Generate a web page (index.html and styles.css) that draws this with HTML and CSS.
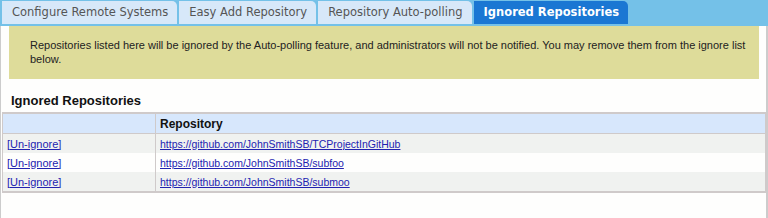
FILE: index.html
```html
<!DOCTYPE html>
<html lang="en">
<head>
    <meta charset="UTF-8">
    <meta name="viewport" content="width=device-width, initial-scale=1.0">
    <title>Ignored Repositories</title>
    <link rel="stylesheet" href="styles.css">
</head>
<body>
    <div class="tabs">
        <div class="tab">Configure Remote Systems</div>
        <div class="tab">Easy Add Repository</div>
        <div class="tab">Repository Auto-polling</div>
        <div class="tab active">Ignored Repositories</div>
    </div>
    <div class="panel">
        <div class="notice">
            Repositories listed here will be ignored by the Auto-polling feature, and administrators will not be notified. You may remove them from the ignore list below.
        </div>
        <h2>Ignored Repositories</h2>
        <table class="repos">
            <thead>
                <tr>
                    <th class="action-col"></th>
                    <th>Repository</th>
                </tr>
            </thead>
            <tbody>
                <tr>
                    <td><a href="#">[Un-ignore]</a></td>
                    <td><a href="#" class="url">https://github.com/JohnSmithSB/TCProjectInGitHub</a></td>
                </tr>
                <tr>
                    <td><a href="#">[Un-ignore]</a></td>
                    <td><a href="#" class="url">https://github.com/JohnSmithSB/subfoo</a></td>
                </tr>
                <tr>
                    <td><a href="#">[Un-ignore]</a></td>
                    <td><a href="#" class="url">https://github.com/JohnSmithSB/submoo</a></td>
                </tr>
            </tbody>
        </table>
    </div>
</body>
</html>
```

FILE: styles.css
```css
body {
    margin: 0;
    font-family: "Liberation Sans", Arial, sans-serif;
    background-color: #fefefd;
    height: 218px;
    overflow: hidden;
}
.tabs {
    display: flex;
    gap: 2px;
    background-color: #74c1e8;
    padding: 1px 0 2px 2px;
}
.tab {
    height: 23px;
    line-height: 23px;
    padding: 0 9px 0 10px;
    font-family: "DejaVu Sans", Verdana, sans-serif;
    font-size: 11.5px;
    color: #555;
    background-color: #d7e8f9;
    border-radius: 0 5px 0 0;
}
.tab.active {
    background-color: #1a77d3;
    color: #fff;
    font-weight: bold;
}
.panel {
    border-left: 1px solid #ccc;
    border-right: 2px solid #ccc;
    height: 192px;
}
.notice {
    margin: 0 7px 0 8px;
    padding: 12px 10px 13px 21px;
    background-color: #dedc9a;
    color: #222;
    font-size: 11px;
    line-height: 14px;
}
h2 {
    margin: 0;
    padding: 14px 0 0 10px;
    height: 19px;
    font-size: 13px;
    color: #111;
}
.repos {
    margin-left: 1px;
    width: 765px;
    border-collapse: collapse;
    border-top: 2px solid #cfcaca;
    border-right: 2px solid #cfcaca;
    border-left: 1px solid #cfcaca;
    border-bottom: 2px solid #cfcaca;
    font-size: 11px;
}
.repos th {
    height: 19px;
    padding: 0 4px;
    text-align: left;
    font-size: 12px;
    background-color: #d7e7fc;
    border-bottom: 1px solid #cfcaca;
    color: #111;
}
.repos th.action-col {
    width: 144px;
}
.repos th + th,
.repos td + td {
    border-left: 1px solid #cfcaca;
}
.repos td {
    height: 19px;
    padding: 0 4px;
}
.repos tbody tr:nth-child(odd) {
    background-color: #f0f2f0;
}
.repos tbody tr:nth-child(even) {
    background-color: #fefefd;
}
.repos a {
    color: #2222b0;
}
.repos a.url {
    font-size: 10.5px;
}
```
